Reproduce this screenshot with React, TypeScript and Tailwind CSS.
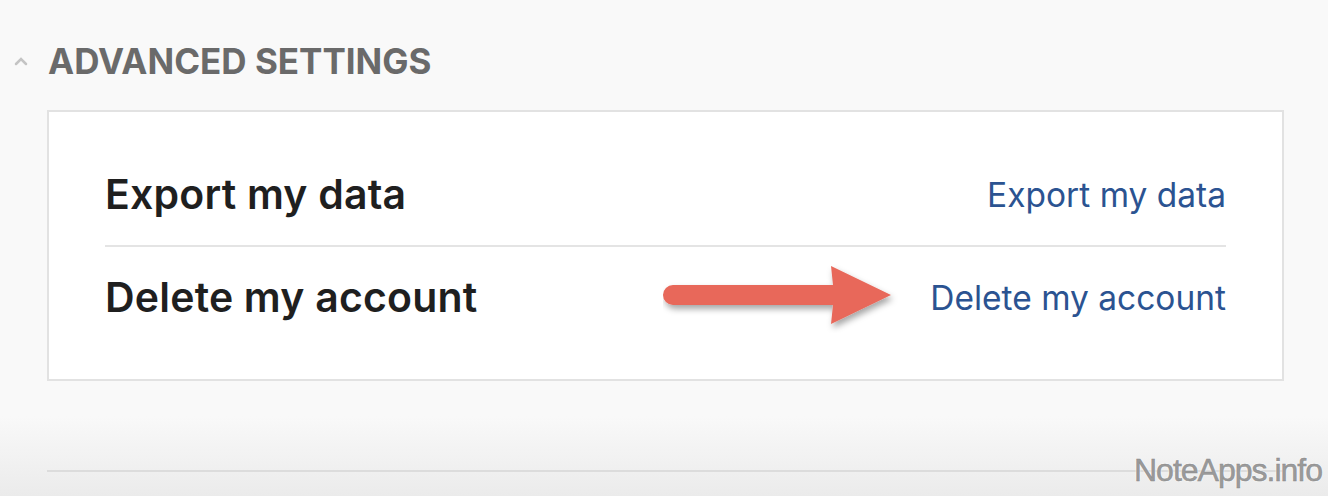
import React from 'react';

function Arrow() {
  return (
    <svg width="240" height="70" viewBox="0 0 240 70" className="shrink-0">
      <defs>
        <filter id="sh" x="-10%" y="-30%" width="130%" height="170%">
          <feDropShadow dx="2" dy="4" stdDeviation="3" floodColor="#000" floodOpacity="0.35" />
        </filter>
      </defs>
      <path
        d="M10 22 L170 22 L168 3 L228 32 L168 61 L170 42 L10 42 A10 10 0 0 1 10 22 Z"
        fill="#e8685a"
        filter="url(#sh)"
      />
    </svg>
  );
}

function Row({ label, action, arrow, last }: { label: string; action: string; arrow?: boolean; last?: boolean }) {
  return (
    <div className={`flex items-center justify-between h-[102px] ${last ? '' : 'border-b-2 border-[#e4e4e4]'}`}>
      <span className="text-[41px] font-semibold text-[#1f1f1f] tracking-[0.2px]">{label}</span>
      <div className="flex items-center gap-[27px]">
        {arrow && <Arrow />}
        <a className="text-[33.5px] text-[#2b5391] cursor-pointer">{action}</a>
      </div>
    </div>
  );
}

export default function App() {
  return (
    <div
      className="relative w-[1328px] h-[496px] overflow-hidden bg-[#f9f9f9]"
      style={{ fontFamily: 'Inter, "Noto Sans", sans-serif' }}
    >
      <div className="absolute left-0 bottom-0 w-[1328px] h-[80px] bg-gradient-to-t from-[#ebebeb] to-transparent pointer-events-none" />
      <div className="relative pt-[38px] pl-[14px]">
        <div className="flex items-center gap-[20px]">
          <svg width="14" height="10" viewBox="0 0 14 10">
            <path d="M2 8 L7 3 L12 8" fill="none" stroke="#c4c4c4" strokeWidth="2.5" strokeLinecap="round" />
          </svg>
          <h2 className="text-[35px] font-bold text-[#6a6a6a] leading-[46px]">ADVANCED SETTINGS</h2>
        </div>
      </div>
      <div className="relative ml-[47px] mt-[26px] w-[1237px] h-[271px] bg-white border-2 border-[#e2e2e2] px-[56px] pt-[33px]">
        <Row label="Export my data" action="Export my data" />
        <Row label="Delete my account" action="Delete my account" arrow last />
      </div>
      <div className="relative ml-[47px] mt-[89px] w-[1237px] h-[2px] bg-[#dcdcdc]" />
      <div
        className="absolute right-[6px] bottom-[2px] text-[32px] text-[#9a9a9a] tracking-[-1px]"
        style={{ fontFamily: '"Liberation Sans", sans-serif', WebkitTextStroke: '0.5px #888', textShadow: '0 0 2px #fff, 0 0 2px #fff' }}
      >
        NoteApps.info
      </div>
    </div>
  );
}
